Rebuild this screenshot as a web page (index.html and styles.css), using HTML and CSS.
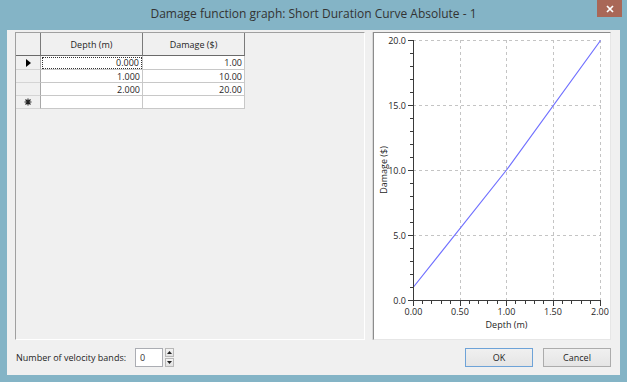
FILE: index.html
```html
<!DOCTYPE html>
<html>
<head>
<meta charset="utf-8">
<link rel="stylesheet" href="styles.css">
</head>
<body>
<div class="window">
  <div class="titlebar">
    <span></span>
    <div class="title">Damage function graph: Short Duration Curve Absolute - 1</div>
    <div class="close"><svg width="8" height="8" viewBox="0 0 8 8"><path d="M1 1L7 7M7 1L1 7" stroke="#fff" stroke-width="1.7"/></svg></div>
  </div>
  <div class="client">
    <div class="panels">
      <div class="grid-panel">
        <div class="grid">
          <div class="hcell corner"></div>
          <div class="hcell">Depth (m)</div>
          <div class="hcell">Damage ($)</div>

          <div class="rh"><svg width="5" height="8" viewBox="0 0 5 8"><polygon points="0,0 5,4 0,8" fill="#000"/></svg></div>
          <div class="dc focus">0.000</div>
          <div class="dc">1.00</div>

          <div class="rh"></div>
          <div class="dc">1.000</div>
          <div class="dc">10.00</div>

          <div class="rh"></div>
          <div class="dc">2.000</div>
          <div class="dc">20.00</div>

          <div class="rh"><svg width="8" height="8" viewBox="0 0 8 8"><path d="M4 0.5V7.5M0.5 4H7.5M1.5 1.5L6.5 6.5M6.5 1.5L1.5 6.5" stroke="#222" stroke-width="1.1"/></svg></div>
          <div class="dc"></div>
          <div class="dc"></div>
        </div>
      </div>
      <div class="chart-panel">
        <svg class="chart" width="236" height="306" viewBox="374 33 236 306">
          <g class="gridlines">
            <path d="M460.5 40V300M506.5 40V300M553.5 40V300M600.5 40V300M413 40.5H601M413 105.5H601M413 170.5H601M413 235.5H601"/>
          </g>
          <polyline class="series" points="413.5,287 506.5,170 600.5,40.5"/>
          <g class="axis">
            <path d="M413.5 40V301M413 300.5H601"/>
            <path d="M408 300.5H413M408 235.5H413M408 170.5H413M408 105.5H413M408 40.5H413"/>
            <path d="M410 287.5H413M410 274.5H413M410 261.5H413M410 248.5H413M410 222.5H413M410 209.5H413M410 196.5H413M410 183.5H413M410 157.5H413M410 144.5H413M410 131.5H413M410 118.5H413M410 92.5H413M410 79.5H413M410 66.5H413M410 53.5H413"/>
            <path d="M413.5 301V306M460.5 301V306M506.5 301V306M553.5 301V306M600.5 301V306"/>
            <path d="M422.5 301V304M431.5 301V304M441.5 301V304M450.5 301V304M469.5 301V304M478.5 301V304M487.5 301V304M497.5 301V304M515.5 301V304M525.5 301V304M534.5 301V304M543.5 301V304M562.5 301V304M571.5 301V304M581.5 301V304M590.5 301V304"/>
          </g>
          <g class="ylabels">
            <text x="406" y="304">0.0</text>
            <text x="406" y="239">5.0</text>
            <text x="406" y="174">10.0</text>
            <text x="406" y="109">15.0</text>
            <text x="406" y="44">20.0</text>
          </g>
          <g class="xlabels">
            <text x="413.5" y="315">0.00</text>
            <text x="460" y="315">0.50</text>
            <text x="506.5" y="315">1.00</text>
            <text x="553" y="315">1.50</text>
            <text x="600" y="315">2.00</text>
          </g>
          <text class="axis-title" x="506.5" y="328">Depth (m)</text>
          <text class="axis-title" transform="translate(387 170) rotate(-90)" x="0" y="0">Damage ($)</text>
        </svg>
      </div>
    </div>
    <div class="footer">
      <span class="label">Number of velocity bands:</span>
      <div class="spin">
        <div class="spin-input">0</div>
        <div class="spin-btns">
          <div class="sb"><svg width="5" height="3" viewBox="0 0 5 3"><polygon points="0,3 2.5,0 5,3" fill="#222"/></svg></div>
          <div class="sb"><svg width="5" height="3" viewBox="0 0 5 3"><polygon points="0,0 2.5,3 5,0" fill="#222"/></svg></div>
        </div>
      </div>
      <div class="spacer"></div>
      <button class="btn default">OK</button>
      <button class="btn">Cancel</button>
    </div>
  </div>
</div>
</body>
</html>
```

FILE: styles.css
```css
html, body {
  margin: 0;
  padding: 0;
}
body {
  width: 627px;
  height: 382px;
  overflow: hidden;
  background: #84b4c6;
  font-family: "Open Sans", "Noto Sans", sans-serif;
  font-size: 9px;
  color: #1e1e1e;
}
.window {
  height: 382px;
  display: flex;
  flex-direction: column;
}
.titlebar {
  height: 30px;
  flex: none;
  display: grid;
  grid-template-columns: 1fr auto 1fr;
  align-items: start;
}
.title {
  padding-top: 5px;
  font-size: 12px;
  color: #333;
  white-space: nowrap;
}
.close {
  justify-self: end;
  margin-right: 5px;
  width: 25px;
  height: 17px;
  background: #a96757;
  display: flex;
  align-items: center;
  justify-content: center;
}
.close svg { display: block; }
.client {
  flex: 1;
  margin: 0 7px 7px 7px;
  background: #f0f0f0;
  padding: 2px 9px 8px 8px;
  display: flex;
  flex-direction: column;
}
.panels {
  display: flex;
  gap: 8px;
  height: 308px;
  flex: none;
}
.grid-panel {
  width: 350px;
  box-sizing: border-box;
  border: 1px solid;
  border-color: #a0a0a0 #ffffff #ffffff #a0a0a0;
  background: #f0f0f0;
}
.grid {
  display: grid;
  grid-template-columns: 25px 102px 102px;
  grid-template-rows: 23px 14px 13px 13px 13px;
}
.hcell {
  box-sizing: border-box;
  border-right: 1px solid #7a7a7a;
  border-bottom: 1px solid #6a6a6a;
  background: #f0f0f0;
  display: flex;
  align-items: center;
  justify-content: center;
  color: #1e1e1e;
}
.rh {
  box-sizing: border-box;
  border-right: 1px solid #a8a8a8;
  border-bottom: 1px solid #d4d4d4;
  background: #f0f0f0;
  display: flex;
  align-items: center;
  justify-content: center;
}
.rh svg { display: block; }
.dc {
  box-sizing: border-box;
  border-right: 1px solid #c8c8c8;
  border-bottom: 1px solid #c8c8c8;
  background: #fff;
  display: flex;
  align-items: center;
  justify-content: flex-end;
  padding-right: 2px;
  line-height: 1;
}
.dc.focus {
  outline: 1px dotted #333;
  outline-offset: -2px;
  padding-right: 3px;
}
.chart-panel {
  width: 238px;
  box-sizing: border-box;
  border: 1px solid;
  border-color: #8c8c8c #e6e6e6 #e6e6e6 #8c8c8c;
  box-shadow: -1px 0 0 #d8d8d8;
  background: #fff;
}
.chart {
  display: block;
}
.gridlines path {
  stroke: #c4c4c4;
  stroke-width: 1;
  stroke-dasharray: 3 3;
  fill: none;
}
.series {
  fill: none;
  stroke: #7070ff;
  stroke-width: 1.2;
}
.axis path {
  stroke: #3a3a3a;
  stroke-width: 1;
  fill: none;
}
.ylabels text {
  text-anchor: end;
  font-size: 9px;
  fill: #1e1e1e;
}
.xlabels text {
  text-anchor: middle;
  font-size: 9px;
  fill: #1e1e1e;
}
.axis-title {
  text-anchor: middle;
  font-size: 9px;
  fill: #1e1e1e;
}
.footer {
  margin-top: 8px;
  height: 19px;
  display: flex;
  align-items: center;
}
.label {
  margin-left: 1px;
  color: #1e1e1e;
}
.spin {
  margin-left: 9px;
  display: flex;
  align-items: center;
  gap: 2px;
  height: 19px;
}
.spin-input {
  box-sizing: border-box;
  width: 28px;
  height: 19px;
  border: 1px solid #abadb3;
  background: #fff;
  padding-left: 4px;
  display: flex;
  align-items: center;
  color: #333;
}
.spin-btns {
  display: flex;
  flex-direction: column;
  gap: 1px;
  height: 19px;
}
.sb {
  box-sizing: border-box;
  width: 9px;
  height: 9px;
  border: 1px solid #b8b8b8;
  background: linear-gradient(#f4f4f4, #e2e2e2);
  display: flex;
  align-items: center;
  justify-content: center;
}
.sb svg { display: block; }
.spacer { flex: 1; }
.btn {
  box-sizing: border-box;
  width: 68px;
  height: 19px;
  margin: 0;
  padding: 0;
  border: 1px solid #acacac;
  background: linear-gradient(#f0f0f0, #e5e5e5);
  font-family: "Open Sans", "Noto Sans", sans-serif;
  font-size: 9px;
  color: #1e1e1e;
}
.btn.default {
  border-color: #6ea3d8;
  margin-right: 10px;
}
```
